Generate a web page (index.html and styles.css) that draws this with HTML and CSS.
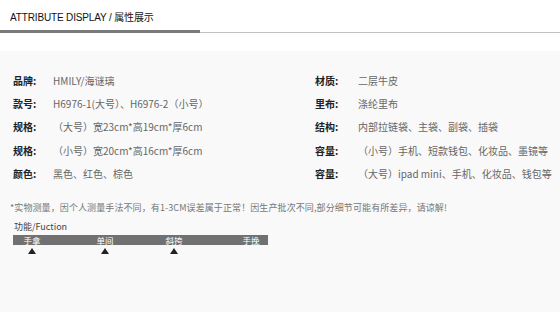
FILE: index.html
```html
<!DOCTYPE html>
<html lang="zh-CN">
<head>
<meta charset="utf-8">
<title>属性展示</title>
<link rel="stylesheet" href="styles.css">
</head>
<body>
<header class="head">
  <h1 class="head-title">ATTRIBUTE DISPLAY / 属性展示</h1>
  <div class="head-rule"><span class="head-rule-active"></span></div>
</header>

<section class="panel">
  <div class="specs">
    <div class="spec-col">
      <div class="spec"><span class="spec-k">品牌:</span><span class="spec-v">HMILY/海谜璃</span></div>
      <div class="spec"><span class="spec-k">款号:</span><span class="spec-v">H6976-1(大号）、H6976-2（小号）</span></div>
      <div class="spec"><span class="spec-k">规格:</span><span class="spec-v">（大号）宽23cm*高19cm*厚6cm</span></div>
      <div class="spec"><span class="spec-k">规格:</span><span class="spec-v">（小号）宽20cm*高16cm*厚6cm</span></div>
      <div class="spec"><span class="spec-k">颜色:</span><span class="spec-v">黑色、红色、棕色</span></div>
    </div>
    <div class="spec-col spec-col-right">
      <div class="spec"><span class="spec-k">材质:</span><span class="spec-v">二层牛皮</span></div>
      <div class="spec"><span class="spec-k">里布:</span><span class="spec-v">涤纶里布</span></div>
      <div class="spec"><span class="spec-k">结构:</span><span class="spec-v">内部拉链袋、主袋、副袋、插袋</span></div>
      <div class="spec"><span class="spec-k">容量:</span><span class="spec-v">（小号）手机、短款钱包、化妆品、墨镜等</span></div>
      <div class="spec"><span class="spec-k">容量:</span><span class="spec-v">（大号）ipad mini、手机、化妆品、钱包等</span></div>
    </div>
  </div>

  <p class="note">*实物测量，因个人测量手法不同，有1-3CM误差属于正常！因生产批次不同,部分细节可能有所差异，请谅解!</p>

  <div class="func">
    <div class="func-title">功能/Fuction</div>
    <div class="func-bar">
      <span class="func-item">手拿</span>
      <span class="func-item">单间</span>
      <span class="func-item">斜挎</span>
      <span class="func-item">手挽</span>
    </div>
    <div class="func-marks">
      <span class="func-cell"><span class="func-mark"></span></span>
      <span class="func-cell"><span class="func-mark"></span></span>
      <span class="func-cell"><span class="func-mark"></span></span>
      <span class="func-cell"></span>
    </div>
  </div>
</section>
</body>
</html>
```

FILE: styles.css
```css
html, body {
  margin: 0;
  padding: 0;
  background: #fff;
  font-family: "Noto Sans CJK SC", "Liberation Sans", sans-serif;
  color: #333;
}

.head {
  background: #fff;
  padding-top: 11px;
}

.head-title {
  margin: 0 0 0 10px;
  font-family: "Liberation Sans", "Noto Sans CJK SC", sans-serif;
  font-size: 10px;
  font-weight: normal;
  line-height: 14px;
  height: 19px;
  color: #111;
  letter-spacing: -0.15px;
}

.head-rule {
  height: 2px;
  border-bottom: 1px solid #c2c2c2;
}

.head-rule-active {
  display: block;
  width: 200px;
  height: 3px;
  background: #7b7b7b;
}

.panel {
  margin-top: 18px;
  background: #f9f9f9;
  min-height: 261px;
  padding-top: 18px;
  box-sizing: border-box;
}

.specs {
  display: flex;
}

.spec-col {
  flex: none;
  width: 302px;
  padding-left: 13px;
}

.spec-col-right {
  flex: 1;
  width: auto;
  padding-left: 0;
}

.spec {
  display: flex;
  height: 23.3px;
  align-items: center;
  font-size: 10px;
  line-height: 12px;
}

.spec-k {
  width: 40px;
  color: #222;
  font-weight: bold;
}

.spec-col-right .spec-k {
  width: 43px;
}

.spec-v {
  color: #666;
}

.note {
  margin: 17px 0 0 10px;
  font-size: 9px;
  line-height: 12px;
  color: #777;
  letter-spacing: 0.1px;
}

.func {
  margin: 8px 0 0 13px;
  width: 255px;
}

.func-title {
  font-size: 9px;
  line-height: 10px;
  color: #444;
  margin-left: 1px;
}

.func-bar,
.func-marks {
  display: grid;
  grid-template-columns: 73px 69px 77px auto;
  padding-left: 9px;
}

.func-bar {
  background: #717171;
  height: 10px;
  margin-top: 3px;
  align-items: center;
}

.func-item {
  display: block;
  color: #fff;
  font-size: 8.5px;
  line-height: 10px;
  width: 20px;
  text-align: center;
  white-space: nowrap;
}

.func-marks {
  padding-top: 3px;
}

.func-cell {
  display: flex;
  justify-content: center;
  width: 20px;
}

.func-mark {
  width: 0;
  height: 0;
  border-left: 4px solid transparent;
  border-right: 4px solid transparent;
  border-bottom: 6px solid #222;
}
```
